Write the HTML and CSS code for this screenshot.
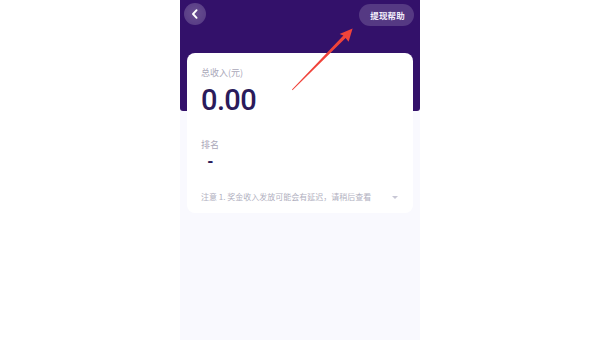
FILE: index.html
```html
<!DOCTYPE html>
<html lang="zh">
<head>
<meta charset="utf-8">
<link rel="stylesheet" href="styles.css">
</head>
<body>
<div class="phone">
  <div class="hero">
    <div class="topbar">
      <div class="back">
        <svg width="22" height="22" viewBox="0 0 22 22"><path d="M12.6 7.2 L9 11 L12.6 14.8" fill="none" stroke="#fff" stroke-width="1.9" stroke-linecap="round" stroke-linejoin="round"/></svg>
      </div>
      <div class="help">提现帮助</div>
    </div>
  </div>
  <div class="card">
    <div class="label">总收入(元)</div>
    <div class="amount">0.00</div>
    <div class="label rank-label">排名</div>
    <div class="rank">-</div>
    <div class="note">
      <span>注意 1. 奖金收入发放可能会有延迟，请稍后查看</span>
      <span class="tri"></span>
    </div>
  </div>
</div>
<svg class="arrow" width="600" height="340" viewBox="0 0 600 340">
  <polygon points="292.5,90.3 345.6,37.9 348.6,41.8 352.6,28.6 339.6,34 343.4,35.6 292,89.6" fill="#f0433a"/>
</svg>
</body>
</html>
```
FILE: styles.css
```css
html, body {
  margin: 0;
  padding: 0;
  background: #ffffff;
}
body {
  display: flex;
  justify-content: center;
  font-family: "Noto Sans CJK SC", "Noto Sans", sans-serif;
  height: 340px;
  overflow: hidden;
}
.phone {
  width: 240px;
  height: 340px;
  background: #f9f9fe;
}
.hero {
  height: 111px;
  background: #33116a;
  border-bottom-left-radius: 3px;
  border-bottom-right-radius: 3px;
}
.topbar {
  display: flex;
  justify-content: space-between;
  align-items: flex-start;
  padding: 3px 6px 0 4px;
}
.back {
  width: 22px;
  height: 22px;
  border-radius: 50%;
  background: radial-gradient(circle at 50% 45%, rgba(255,255,255,0.26), rgba(255,255,255,0.16));
  display: flex;
}
.help {
  margin-top: 1px;
  height: 22px;
  padding: 0 9px 0 11px;
  border-radius: 11px;
  background: rgba(255,255,255,0.17);
  color: #f3eefb;
  font-size: 8.5px;
  line-height: 22px;
  font-weight: 700;
  letter-spacing: 0.2px;
}
.card {
  margin: -58px 7px 0 7px;
  background: #ffffff;
  border-radius: 8px;
  padding: 14px 14px 10px 14px;
  height: 136px;
}
.label {
  font-size: 9px;
  line-height: 12px;
  color: #aaa8b9;
}
.amount {
  margin-top: 5px;
  font-family: Roboto, "Noto Sans", sans-serif;
  font-size: 29px;
  line-height: 32px;
  font-weight: 500;
  color: #2b1b5b;
  letter-spacing: -0.6px;
}
.rank-label {
  margin-top: 23px;
}
.rank {
  margin-top: 3px;
  padding-left: 6px;
  font-family: Roboto, sans-serif;
  font-weight: 900;
  font-size: 15px;
  line-height: 16px;
  color: #2b1b5b;
}
.note {
  margin-top: 21px;
  display: flex;
  justify-content: space-between;
  align-items: center;
  font-size: 8px;
  line-height: 12px;
  color: #b1b0c0;
}
.tri {
  width: 0;
  height: 0;
  border-left: 3px solid transparent;
  border-right: 3px solid transparent;
  border-top: 3px solid #c8c7d5;
  margin-right: 1px;
}
.arrow {
  position: absolute;
  left: 0;
  top: 0;
  pointer-events: none;
}
```
